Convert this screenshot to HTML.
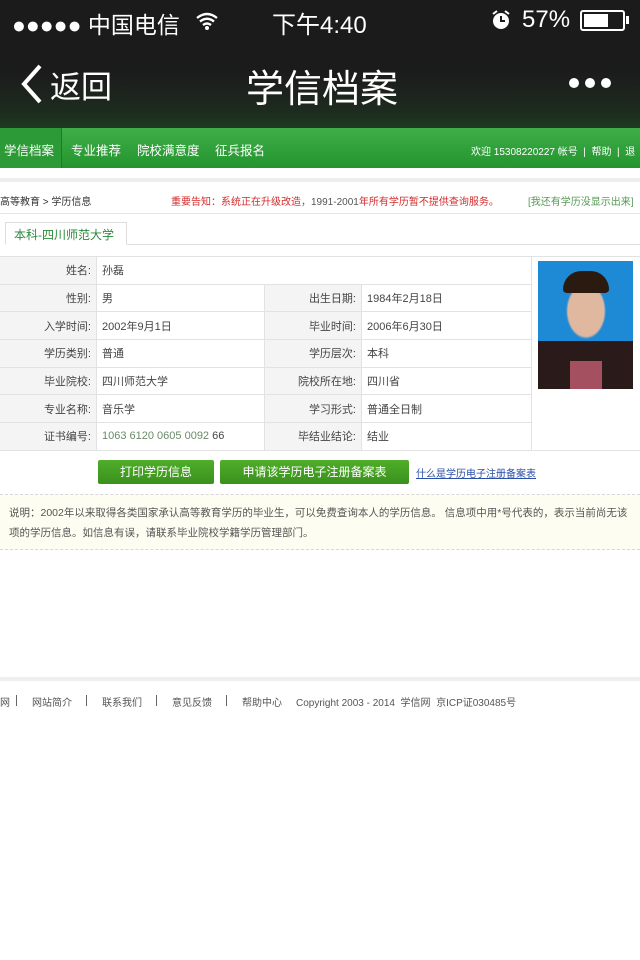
<!DOCTYPE html>
<html><head><meta charset="utf-8"><style>
*{margin:0;padding:0;box-sizing:border-box}
body{width:640px;height:960px;background:#fff;font-family:"Liberation Sans","Noto Sans CJK SC",sans-serif;position:relative;overflow:hidden;color:#333}
.a{position:absolute;white-space:nowrap}
#top{position:absolute;left:0;top:0;width:640px;height:128px;background:linear-gradient(#1b1b1b 0,#1b1b1b 70px,#1d2a1e 110px,#1f3a22 128px)}
#green{position:absolute;left:0;top:128px;width:640px;height:40px;background:linear-gradient(#3fae48,#23942e)}
.s{font-size:11px}
.n{position:absolute;top:140px;color:#fff;font-size:12.5px;white-space:nowrap}
.f{position:absolute;top:694px;font-size:10px;color:#555;white-space:nowrap}
.p{position:absolute;top:695px;width:1px;height:11px;background:#666}
td{border:1px solid #e2e2e2;font-size:11px;height:27.7px;padding:0 5px;color:#444}
td.l{background:#f4f4f4;text-align:right;width:97px}
</style></head><body>
<div id="top"></div>
<div class="a" style="left:12px;top:6px;color:#fff;font-size:23px">●●●●● 中国电信</div>
<svg class="a" style="left:195px;top:12px" width="24" height="18" viewBox="0 0 24 18"><path d="M2 6Q12-2 22 6M5 9.5Q12 4 19 9.5M8 13Q12 10 16 13" stroke="#fff" stroke-width="2.4" fill="none"/><circle cx="12" cy="16" r="2" fill="#fff"/></svg>
<div class="a" style="left:272px;top:5px;color:#fff;font-size:24px">下午4:40</div>
<svg class="a" style="left:490px;top:9px" width="22" height="22" viewBox="0 0 22 22"><circle cx="11" cy="12" r="8" fill="#fff"/><path d="M11 7v5h4" stroke="#1b1b1b" stroke-width="2" fill="none"/><path d="M3 5l4-3M19 5l-4-3" stroke="#fff" stroke-width="2"/></svg>
<div class="a" style="left:522px;top:6px;color:#fff;font-size:24px">57%</div>
<div class="a" style="left:580px;top:10px;width:45px;height:21px;border:2px solid #fff;border-radius:3px"><div style="margin:2px;width:24px;height:13px;background:#fff"></div></div>
<div class="a" style="left:626px;top:16px;width:3px;height:8px;background:#fff"></div>
<svg class="a" style="left:20px;top:64px" width="24" height="40"><path d="M20 2L4 20L20 38" stroke="#fff" stroke-width="4" fill="none"/></svg>
<div class="a" style="left:50px;top:62px;color:#fff;font-size:31px">返回</div>
<div class="a" style="left:246px;top:58px;color:#fff;font-size:38px">学信档案</div>
<svg class="a" style="left:568px;top:77px" width="44" height="12"><circle cx="6" cy="6" r="5" fill="#fff"/><circle cx="22" cy="6" r="5" fill="#fff"/><circle cx="38" cy="6" r="5" fill="#fff"/></svg>
<div id="green"></div>
<div class="a" style="left:0;top:128px;width:62px;height:40px;background:#2c9a36;border-right:1px solid #1e7a27"></div>
<div class="n" style="left:4px">学信档案</div>
<div class="n" style="left:71px">专业推荐</div>
<div class="n" style="left:137px">院校满意度</div>
<div class="n" style="left:215px">征兵报名</div>
<div class="a s" style="left:471px;top:143px;color:#fff;font-size:10px">欢迎 15308220227 帐号 &nbsp;|&nbsp; 帮助 &nbsp;|&nbsp; 退</div>
<div class="a" style="left:0;top:178px;width:640px;height:4px;background:#eee"></div>
<div class="a s" style="left:0;top:193px;font-size:10px;color:#333">高等教育 &gt; 学历信息</div>
<div class="a s" style="left:171px;top:193px;font-size:10px;color:#d42b2b">重要告知：系统正在升级改造，<span style="color:#555">1991-2001</span>年所有学历暂不提供查询服务。</div>
<div class="a s" style="left:528px;top:193px;font-size:10px;color:#559955">[我还有学历没显示出来]</div>
<div class="a" style="left:0;top:213px;width:640px;height:1px;background:#e5e5e5"></div>
<div class="a" style="left:10px;top:244px;width:630px;height:1px;background:#ddd"></div>
<div class="a" style="left:5px;top:222px;width:122px;height:23px;border:1px solid #ddd;border-bottom:1px solid #fff;background:#fff;font-size:12px;color:#2a8a3a;padding:3px 0 0 8px">本科-四川师范大学</div>
<table class="a" style="left:-1px;top:256px;border-collapse:collapse;width:642px">
<tr><td class="l">姓名:</td><td colspan="3">孙磊</td><td rowspan="7" style="width:109px;vertical-align:top;padding:4px 6px"><div style="width:95px;height:128px;background:radial-gradient(ellipse 20px 28px at 48px 50px,#e0b8a0 90%,transparent 100%),linear-gradient(transparent 80px,#2a1a1a 80px),#1e8ad6;position:relative"><div style="position:absolute;left:25px;top:10px;width:46px;height:22px;background:#2a1a10;border-radius:20px 20px 4px 4px"></div><div style="position:absolute;left:32px;top:100px;width:32px;height:28px;background:#a45060"></div></div></td></tr>
<tr><td class="l">性别:</td><td style="width:168px">男</td><td class="l">出生日期:</td><td>1984年2月18日</td></tr>
<tr><td class="l">入学时间:</td><td>2002年9月1日</td><td class="l">毕业时间:</td><td>2006年6月30日</td></tr>
<tr><td class="l">学历类别:</td><td>普通</td><td class="l">学历层次:</td><td>本科</td></tr>
<tr><td class="l">毕业院校:</td><td>四川师范大学</td><td class="l">院校所在地:</td><td>四川省</td></tr>
<tr><td class="l">专业名称:</td><td>音乐学</td><td class="l">学习形式:</td><td>普通全日制</td></tr>
<tr><td class="l">证书编号:</td><td><span style="color:#6a8a6a">1063 6120 0605 0092</span> 66</td><td class="l">毕结业结论:</td><td>结业</td></tr>
</table>
<div class="a" style="left:98px;top:460px;width:116px;height:24px;background:linear-gradient(#4fae2a,#3a901c);border-radius:2px;color:#fff;font-size:12px;text-align:center;line-height:24px">打印学历信息</div>
<div class="a" style="left:220px;top:460px;width:189px;height:24px;background:linear-gradient(#4fae2a,#3a901c);border-radius:2px;color:#fff;font-size:12px;text-align:center;line-height:24px">申请该学历电子注册备案表</div>
<div class="a" style="left:416px;top:465px;color:#2a4fa8;font-size:10px;text-decoration:underline">什么是学历电子注册备案表</div>
<div class="a" style="left:0;top:494px;width:640px;height:56px;background:#fefdf1;border-top:1px dashed #d8d8d8;border-bottom:1px dashed #d8d8d8"></div>
<div class="a" style="left:9px;top:503px;font-size:10.5px;color:#555;line-height:20px">说明：2002年以来取得各类国家承认高等教育学历的毕业生，可以免费查询本人的学历信息。 信息项中用*号代表的，表示当前尚无该<br>项的学历信息。如信息有误，请联系毕业院校学籍学历管理部门。</div>
<div class="a" style="left:0;top:677px;width:640px;height:4px;background:#eee"></div>
<div class="f" style="left:0">网</div>
<div class="p" style="left:16px"></div>
<div class="f" style="left:32px">网站简介</div>
<div class="p" style="left:86px"></div>
<div class="f" style="left:102px">联系我们</div>
<div class="p" style="left:156px"></div>
<div class="f" style="left:172px">意见反馈</div>
<div class="p" style="left:226px"></div>
<div class="f" style="left:242px">帮助中心</div>
<div class="f" style="left:296px">Copyright 2003 - 2014 &nbsp;学信网 &nbsp;京ICP证030485号</div>
</body></html>
